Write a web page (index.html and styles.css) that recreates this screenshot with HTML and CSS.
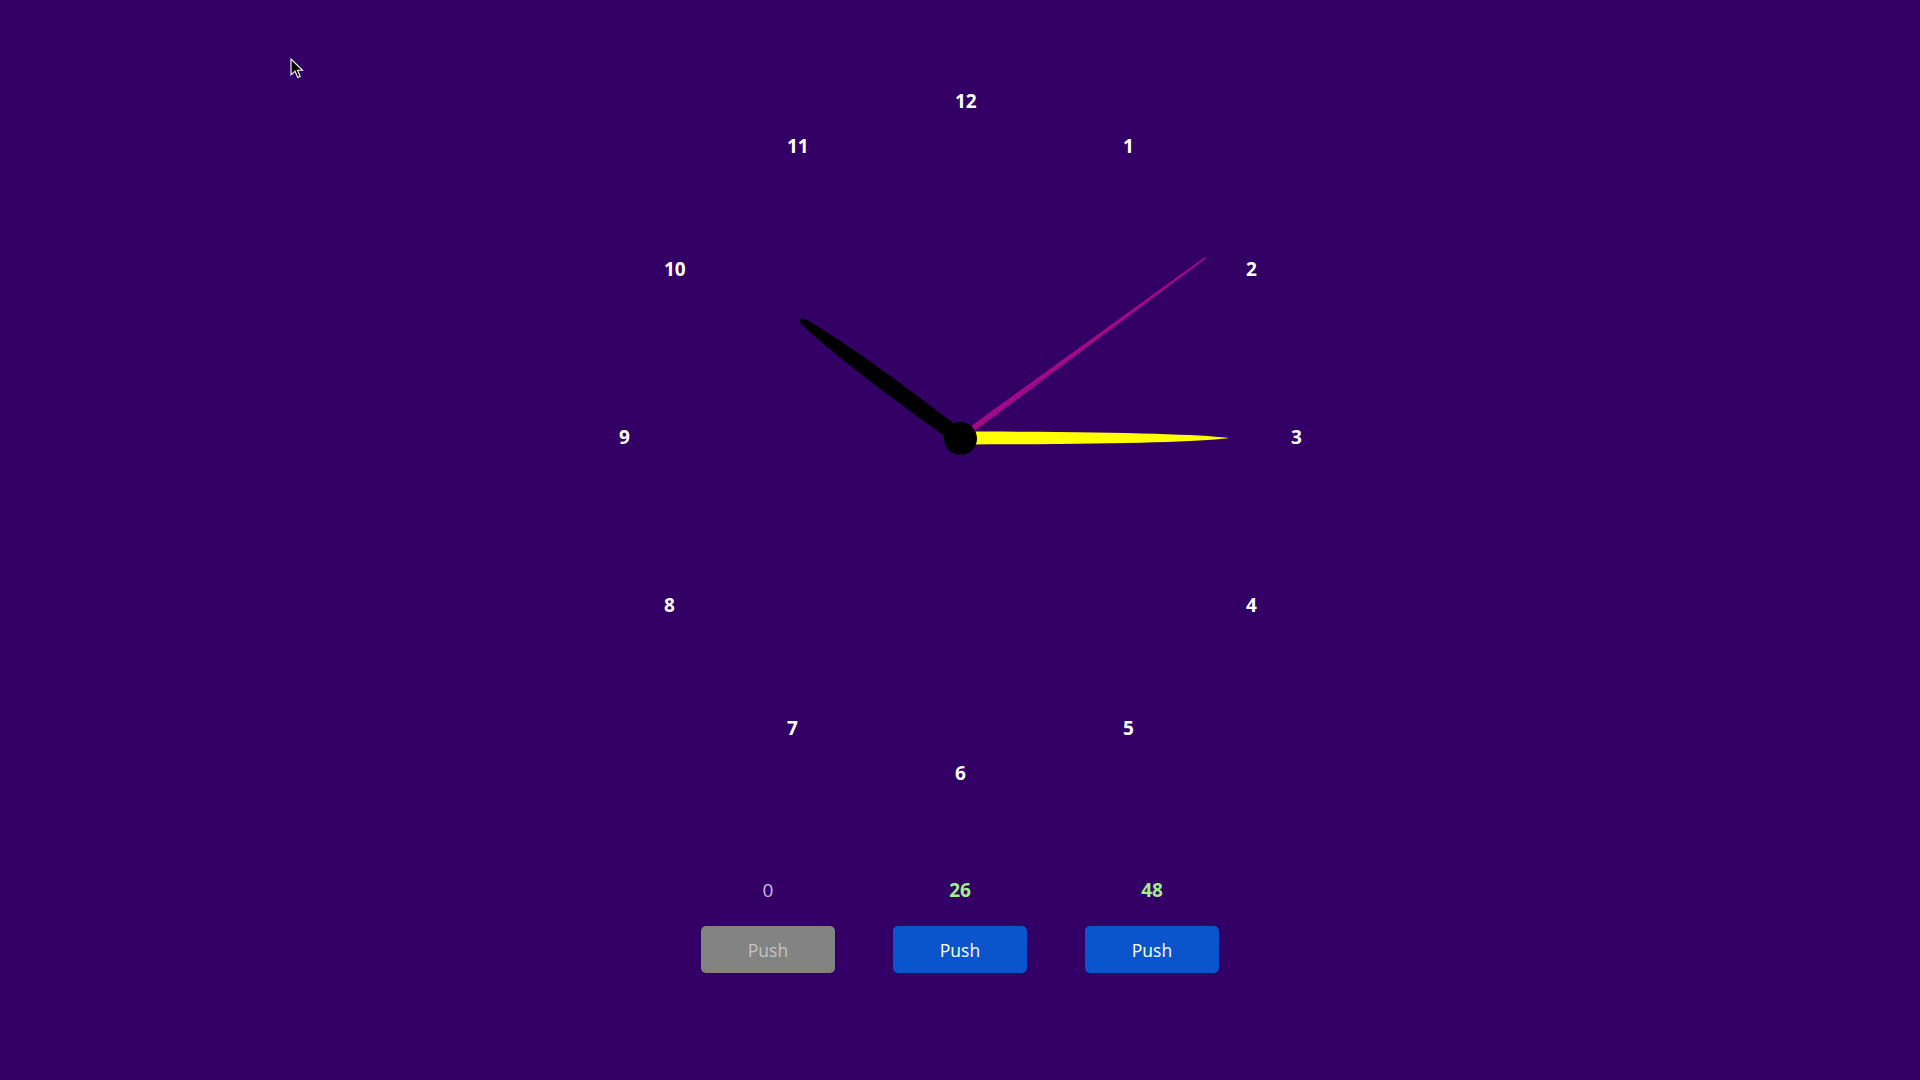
FILE: index.html
```html
<!DOCTYPE html>
<html lang="en">
<head>
<meta charset="utf-8">
<title>Clock</title>
<link rel="stylesheet" href="styles.css">
</head>
<body>
<main class="page">
  <div class="clock">
    <svg class="hands" width="760" height="760" viewBox="-380 -380 760 760">
      <path class="hand-second" transform="rotate(53.7)" d="M -3.2 0 L -0.9 -304 L 0.9 -304 L 3.2 0 Z"/>
      <path class="hand-minute" d="M 0 -6.5 C 150 -6.5 235 -4 268 -0.3 L 268 0.3 C 235 4 150 6.5 0 6.5 Z"/>
      <path class="hand-hour" transform="rotate(306.6)" d="M -7.5 0 C -9 -70 -8.5 -150 -3.5 -193 C -2 -201 2 -201 3.5 -193 C 8.5 -150 9 -70 7.5 0 Z"/>
      <circle class="hub" cx="0.5" cy="0.5" r="16.5"/>
    </svg>
    <span class="num" style="left:375px;top:44px">12</span>
    <span class="num" style="left:543px;top:89px">1</span>
    <span class="num" style="left:666px;top:212px">2</span>
    <span class="num" style="left:711px;top:380px">3</span>
    <span class="num" style="left:666px;top:548px">4</span>
    <span class="num" style="left:543px;top:671px">5</span>
    <span class="num" style="left:375px;top:716px">6</span>
    <span class="num" style="left:207px;top:671px">7</span>
    <span class="num" style="left:84px;top:548px">8</span>
    <span class="num" style="left:39px;top:380px">9</span>
    <span class="num" style="left:84px;top:212px">10</span>
    <span class="num" style="left:207px;top:89px">11</span>
  </div>
  <div class="controls">
    <div class="control">
      <span class="count count-zero">0</span>
      <button class="push push-disabled" disabled>Push</button>
    </div>
    <div class="control">
      <span class="count count-active">26</span>
      <button class="push">Push</button>
    </div>
    <div class="control">
      <span class="count count-active">48</span>
      <button class="push">Push</button>
    </div>
  </div>
</main>
<svg class="cursor" width="14" height="21" viewBox="0 0 14 21">
  <path d="M1 1 L1 17 L5 13.2 L7.8 19.5 L10.2 18.4 L7.5 12.3 L12.5 12.3 Z" fill="#000" stroke="#fff" stroke-width="1.1" stroke-linejoin="miter"/>
</svg>
</body>
</html>
```

FILE: styles.css
```css
html, body {
  margin: 0;
  padding: 0;
  background: #330066;
  width: 1920px;
  height: 1080px;
  overflow: hidden;
  font-family: "Open Sans", "Noto Sans", "Liberation Sans", sans-serif;
}

.page {
  display: flex;
  flex-direction: column;
  align-items: center;
  padding-top: 58px;
}

.clock {
  position: relative;
  width: 760px;
  height: 760px;
}

.hands {
  position: absolute;
  left: 0;
  top: 0;
  overflow: visible;
}

.hand-second { fill: #a00a88; }
.hand-minute { fill: #ffff00; }
.hand-hour { fill: #000000; }
.hub { fill: #000000; }

.num {
  position: absolute;
  color: #ffffff;
  font-weight: 700;
  font-size: 19px;
  line-height: 20px;
  transform: translateY(-50%);
  margin-top: -1px;
  white-space: nowrap;
}

.controls {
  display: flex;
  gap: 58px;
  margin-top: 58px;
}

.control {
  display: flex;
  flex-direction: column;
  align-items: center;
  gap: 22px;
  width: 134px;
}

.count {
  font-size: 19px;
  line-height: 28px;
  height: 28px;
}

.count-zero {
  color: #d2b6e8;
  font-weight: 400;
}

.count-active {
  color: #a2f08c;
  font-weight: 700;
}

.push {
  width: 134px;
  height: 47px;
  border: none;
  border-radius: 5px;
  background: #0a55cb;
  color: #ffffff;
  font-family: "Open Sans", "Noto Sans", "Liberation Sans", sans-serif;
  font-size: 17.5px;
  padding: 0;
  padding-top: 1px;
}

.push-disabled {
  background: #838383;
  color: #c4c4c4;
}

.cursor {
  position: absolute;
  left: 290px;
  top: 58px;
}
```
